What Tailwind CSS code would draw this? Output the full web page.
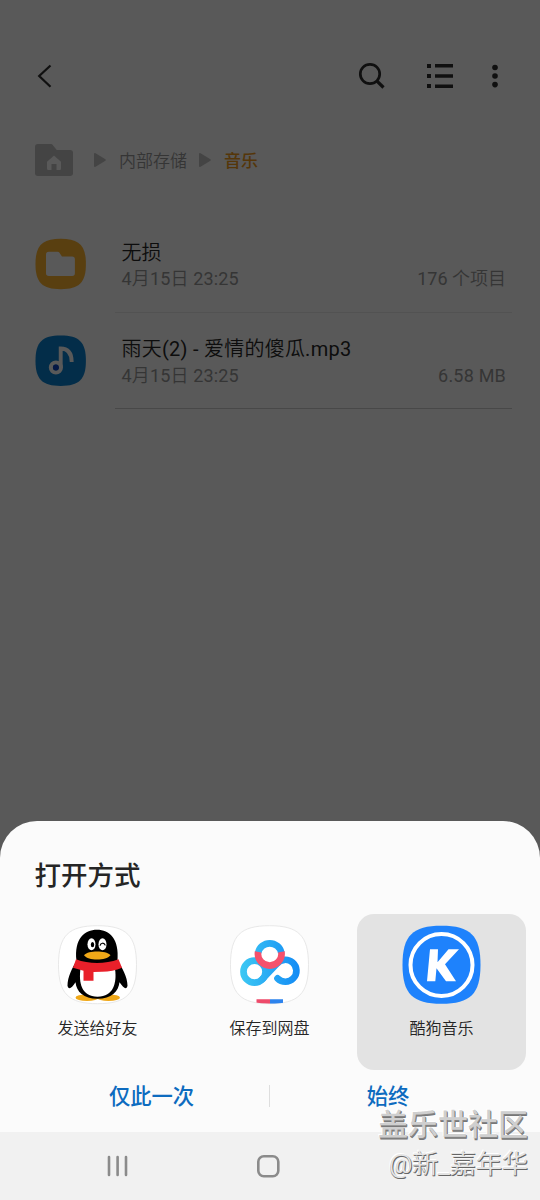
<!DOCTYPE html>
<html lang="zh-CN">
<head>
<meta charset="utf-8">
<title>打开方式</title>
<script src="https://cdn.jsdelivr.net/npm/@tailwindcss/browser@4"></script>
</head>
<body class="relative flex h-[1200px] w-[540px] flex-col overflow-hidden bg-[#595959] font-[Roboto,'Noto_Sans_CJK_SC_DemiLight','Noto_Sans_CJK_SC',sans-serif]">
<main class="h-[821px] shrink-0">
  <header class="flex h-[112px] items-end justify-between pr-[42px] pb-[22px] pl-[36px]">
    <svg class="h-7 w-4" viewBox="0 0 16 28" fill="none" stroke="#101010" stroke-width="2.2"><path d="M14.500 3.500 3.200 14l11.300 10.700"/></svg>
    <div class="flex items-center">
      <svg class="h-7 w-7" viewBox="0 0 28 28" fill="none" stroke="#101010" stroke-width="2.7"><circle cx="12" cy="12" r="9.700"/><path d="m18.800 18.800 6.700 6.700" stroke-width="3.200"/></svg>
      <svg class="ml-10 h-7 w-7" viewBox="0 0 28 28" fill="#101010"><path d="M1 2h4v4H1zM9 2h18v3.600H9zM1 12h4v4H1zM9 12.200h18v3.600H9zM1 22h4v4H1zM9 22.400h18V26H9z"/></svg>
      <svg class="ml-[38px] h-7 w-[6px]" viewBox="0 0 6 28" fill="#101010"><circle cx="3" cy="5.500" r="2.800"/><circle cx="3" cy="14" r="2.800"/><circle cx="3" cy="22.600" r="2.800"/></svg>
    </div>
  </header>
  <nav class="flex h-[96px] items-center pl-[35px] text-[17px]">
    <svg class="h-8 w-[38px]" viewBox="0 0 38 32"><path fill="#444" d="M3 0h12.500c1 0 1.600.3 2.200 1l4 5H35q3 0 3 3v20q0 3-3 3H3q-3 0-3-3V3q0-3 3-3z"/><path fill="#595959" d="m19 11.500 7 6.300v7q0 1.200-1.200 1.200H21.500v-6h-5v6h-3.300Q12 26 12 24.800v-7z"/></svg>
    <svg class="ml-[21px] h-[14px] w-3" viewBox="0 0 12 14" fill="#444"><path d="M0 1.100Q.2-.4 1.500.3l9.800 6q1 .7 0 1.400l-9.800 6Q.2 14.400 0 12.900z"/></svg>
    <span class="ml-[13px] pt-[3px] text-[#353535]">内部存储</span>
    <svg class="ml-3 h-[14px] w-3" viewBox="0 0 12 14" fill="#444"><path d="M0 1.100Q.2-.4 1.500.3l9.800 6q1 .7 0 1.400l-9.800 6Q.2 14.400 0 12.900z"/></svg>
    <span class="ml-[13px] pt-[3px] font-[Roboto,'Noto_Sans_CJK_SC',sans-serif] font-medium text-[#553609]">音乐</span>
  </nav>
  <ul>
    <li class="flex h-[97px] pl-[35px]">
      <svg class="mt-[30px] size-[52px]" viewBox="0.3 0 52 52"><path fill="#593f10" d="M26 .8C44.500.8 51.200 7.500 51.200 26S44.500 51.200 26 51.200.8 44.500.8 26 7.500.8 26 .8z"/><path fill="#595959" d="M14 13.800h9q1.200 0 1.800.9l2.500 3.900H37.500q2.700 0 2.700 2.700v14q0 2.700-2.700 2.700H14q-2.700 0-2.700-2.700V16.500q0-2.700 2.700-2.700z"/></svg>
      <div class="mr-[28px] ml-[28px] h-[105px] flex-1 border-b border-[#525252] pr-[6px] pl-[6.500px]">
        <div class="mt-[32px] text-[20px] leading-[26px] text-[#0d0d0d]">无损</div>
        <div class="flex justify-between text-[18px] leading-[26px] text-[#353535]"><span class="tracking-[0.16px]">4月15日 23:25</span><span>176 个项目</span></div>
      </div>
    </li>
    <li class="flex h-[96px] pl-[35px]">
      <svg class="mt-[29.500px] size-[52px]" viewBox="0.3 0.3 52 52"><path fill="#032d49" d="M26 .8C44.500.8 51.200 7.500 51.200 26S44.500 51.200 26 51.200.8 44.500.8 26 7.500.8 26 .8z"/><g fill="none" stroke="#595959"><circle cx="21.200" cy="32.800" r="5" stroke-width="4.200"/><path d="M26 33V13.800Q37 14 37 27.200" stroke-width="3.900"/></g><circle cx="21.200" cy="32.800" r="3" fill="#051744"/></svg>
      <div class="mr-[28px] ml-[28px] h-[104px] flex-1 border-b border-[#484848] pr-[6px] pl-[6.500px]">
        <div class="mt-[31px] text-[20px] leading-[26px] tracking-[0.24px] text-[#0d0d0d]">雨天(2) - 爱情的傻瓜.mp3</div>
        <div class="flex justify-between text-[18px] leading-[27px] text-[#353535]"><span class="tracking-[0.16px]">4月15日 23:25</span><span class="tracking-[0.2px]">6.58 MB</span></div>
      </div>
    </li>
  </ul>
</main>
<section class="h-[311px] shrink-0 rounded-t-[37px] bg-[#fbfbfb]">
  <h1 class="h-[93px] pt-[39px] pl-[34.500px] font-[Roboto,'Noto_Sans_CJK_SC',sans-serif] text-[26.500px] leading-[32px] font-medium text-[#252525]">打开方式</h1>
  <div class="grid h-[156px] grid-cols-[169px_169px_169px] gap-x-[3px] pl-[13px] text-center text-[16px] leading-6 text-[#252525]">
    <div class="flex flex-col items-center pt-[11px]">
      <svg class="size-[80px]" viewBox="0.5 0.3 80 80"><path fill="#fff" stroke="#e8e8e8" d="M40 1C69 1 79 11 79 40S69 79 40 79 1 69 1 40 11 1 40 1z"/>
        <g fill="#f0a818"><ellipse cx="29.500" cy="73" rx="11.500" ry="3.300"/><ellipse cx="51" cy="73" rx="11.500" ry="3.300"/></g>
        <path d="M19 36C16.500 14 27 5 39.500 5S62 14 60 36c4.500 7 10 16 10 25-1 5-4.500 1.500-8-3.500-1 9-8 16.500-22 16.500S19 67 18 57.500c-3 5-7 8.500-8 3.500 0-9 5-18 9-25z"/>
        <path fill="#fff" d="M23 44h34.500c2 14-1.500 28-17.500 28S21 58 23 44z"/>
        <g fill="#fff"><ellipse cx="34" cy="19.500" rx="4" ry="6"/><ellipse cx="45" cy="19.500" rx="4" ry="6"/></g><ellipse cx="35" cy="20" rx="1.700" ry="2.600"/><path d="M42.600 21c.6-3 4-3.500 5.200-.3" fill="none" stroke="#000" stroke-width="1.200"/>
        <path fill="#f0a818" d="M26.500 30.500C29 27.500 34 26.700 39.500 26.700s11 .8 13.500 3.800c-2.500 3-7.500 4.200-13.500 4.200S29 33.500 26.500 30.500z"/>
        <path fill="#e9202a" d="M18.500 34.500c13 5 29 5 42.500 0l3.500 8.500c-6 2.500-13 3.800-20 4.100L36 47.300v8.700h-10V46l-10.500-3z"/></svg>
      <span class="mt-[12px]">发送给好友</span>
    </div>
    <div class="flex flex-col items-center pt-[11px]">
      <svg class="size-[80px]" viewBox="0.5 0.3 80 80"><defs><linearGradient id="cloud" x1="10" x2="70" y1="0" y2="0" gradientUnits="userSpaceOnUse"><stop stop-color="#3dc9f3"/><stop offset="1" stop-color="#138bf5"/></linearGradient><clipPath id="tile"><path d="M40 1C69 1 79 11 79 40S69 79 40 79 1 69 1 40 11 1 40 1z"/></clipPath></defs>
        <path fill="#fff" stroke="#e8e8e8" d="M40 1C69 1 79 11 79 40S69 79 40 79 1 69 1 40 11 1 40 1z"/>
        <g fill="none" stroke="url(#cloud)" stroke-width="6.700"><circle cx="25" cy="47" r="11"/><path d="M48 53.700A11 11 0 1 0 47.300 39.200L32.700 54.500" stroke-linecap="round"/><path d="M28.700 28a11.800 11.800 0 0 1 23.100 0"/></g>
        <path d="M28.600 27.200a11.800 11.800 0 1 0 23.300 0" fill="none" stroke="#f5516c" stroke-width="6.700"/>
        <g clip-path="url(#tile)"><path fill="#ee4a6a" d="M27 74.500h13.500v6H27z"/><path fill="#2d83ed" d="M40.500 74.500H53.500v6H40.500z"/></g></svg>
      <span class="mt-[12px]">保存到网盘</span>
    </div>
    <div class="flex flex-col items-center rounded-[17px] bg-[#e3e3e3] pt-[11px]">
      <svg class="size-[80px]" viewBox="0.5 0.3 80 80"><path fill="#1e82fc" d="M40 1C69 1 79 11 79 40S69 79 40 79 1 69 1 40 11 1 40 1z"/><circle cx="40" cy="40.300" r="31" fill="none" stroke="#fff" stroke-width="4"/><path fill="#fff" d="M28.500 24.500h8L36 37.500 47 24.500h10.500L43.500 39.500 54.500 56.500H44.500L35 43.500 33.800 56.500h-8.300z"/></svg>
      <span class="mt-[12px]">酷狗音乐</span>
    </div>
  </div>
  <div class="flex h-[52px] items-center font-[Roboto,'Noto_Sans_CJK_SC',sans-serif] text-[21.300px] leading-8 font-medium text-[#0d6bbf]">
    <span class="w-[269px] pt-[2px] pl-[34px] text-center">仅此一次</span>
    <i class="h-[22px] w-px bg-[#dedede]"></i>
    <span class="w-[236px] pt-[2px] text-center">始终</span>
  </div>
</section>
<footer class="flex h-[68px] shrink-0 items-center bg-[#f1f1f1]">
  <svg class="ml-[106px] h-6 w-6" viewBox="0 0 24 24" fill="none" stroke="#8b8b8b" stroke-width="2.600" stroke-linecap="round"><path d="M3 3v18M11.600 3v18M20 3v18"/></svg>
  <svg class="ml-[126px] h-6 w-6" viewBox="0 0 24 24" fill="none" stroke="#8b8b8b" stroke-width="2.600"><rect x="2.300" y="2.300" width="20" height="20" rx="5.500"/></svg>
</footer>
<div class="absolute top-[1105px] right-[12px] text-right">
  <div class="font-[Roboto,'Noto_Sans_CJK_SC',sans-serif] text-[30px] leading-[40px] font-medium text-[#cfcfcf] [text-shadow:1px_1px_0_#858585,1px_2px_0_#777,-1px_-1px_0_#fff]">盖乐世社区</div>
  <div class="text-[26px] leading-[39px] text-[#e4e4e4] [text-shadow:1px_1px_0_#666,0px_1px_0_#777,-1px_-1px_0_#fff]">@新_嘉年华</div>
</div>
</body>
</html>
